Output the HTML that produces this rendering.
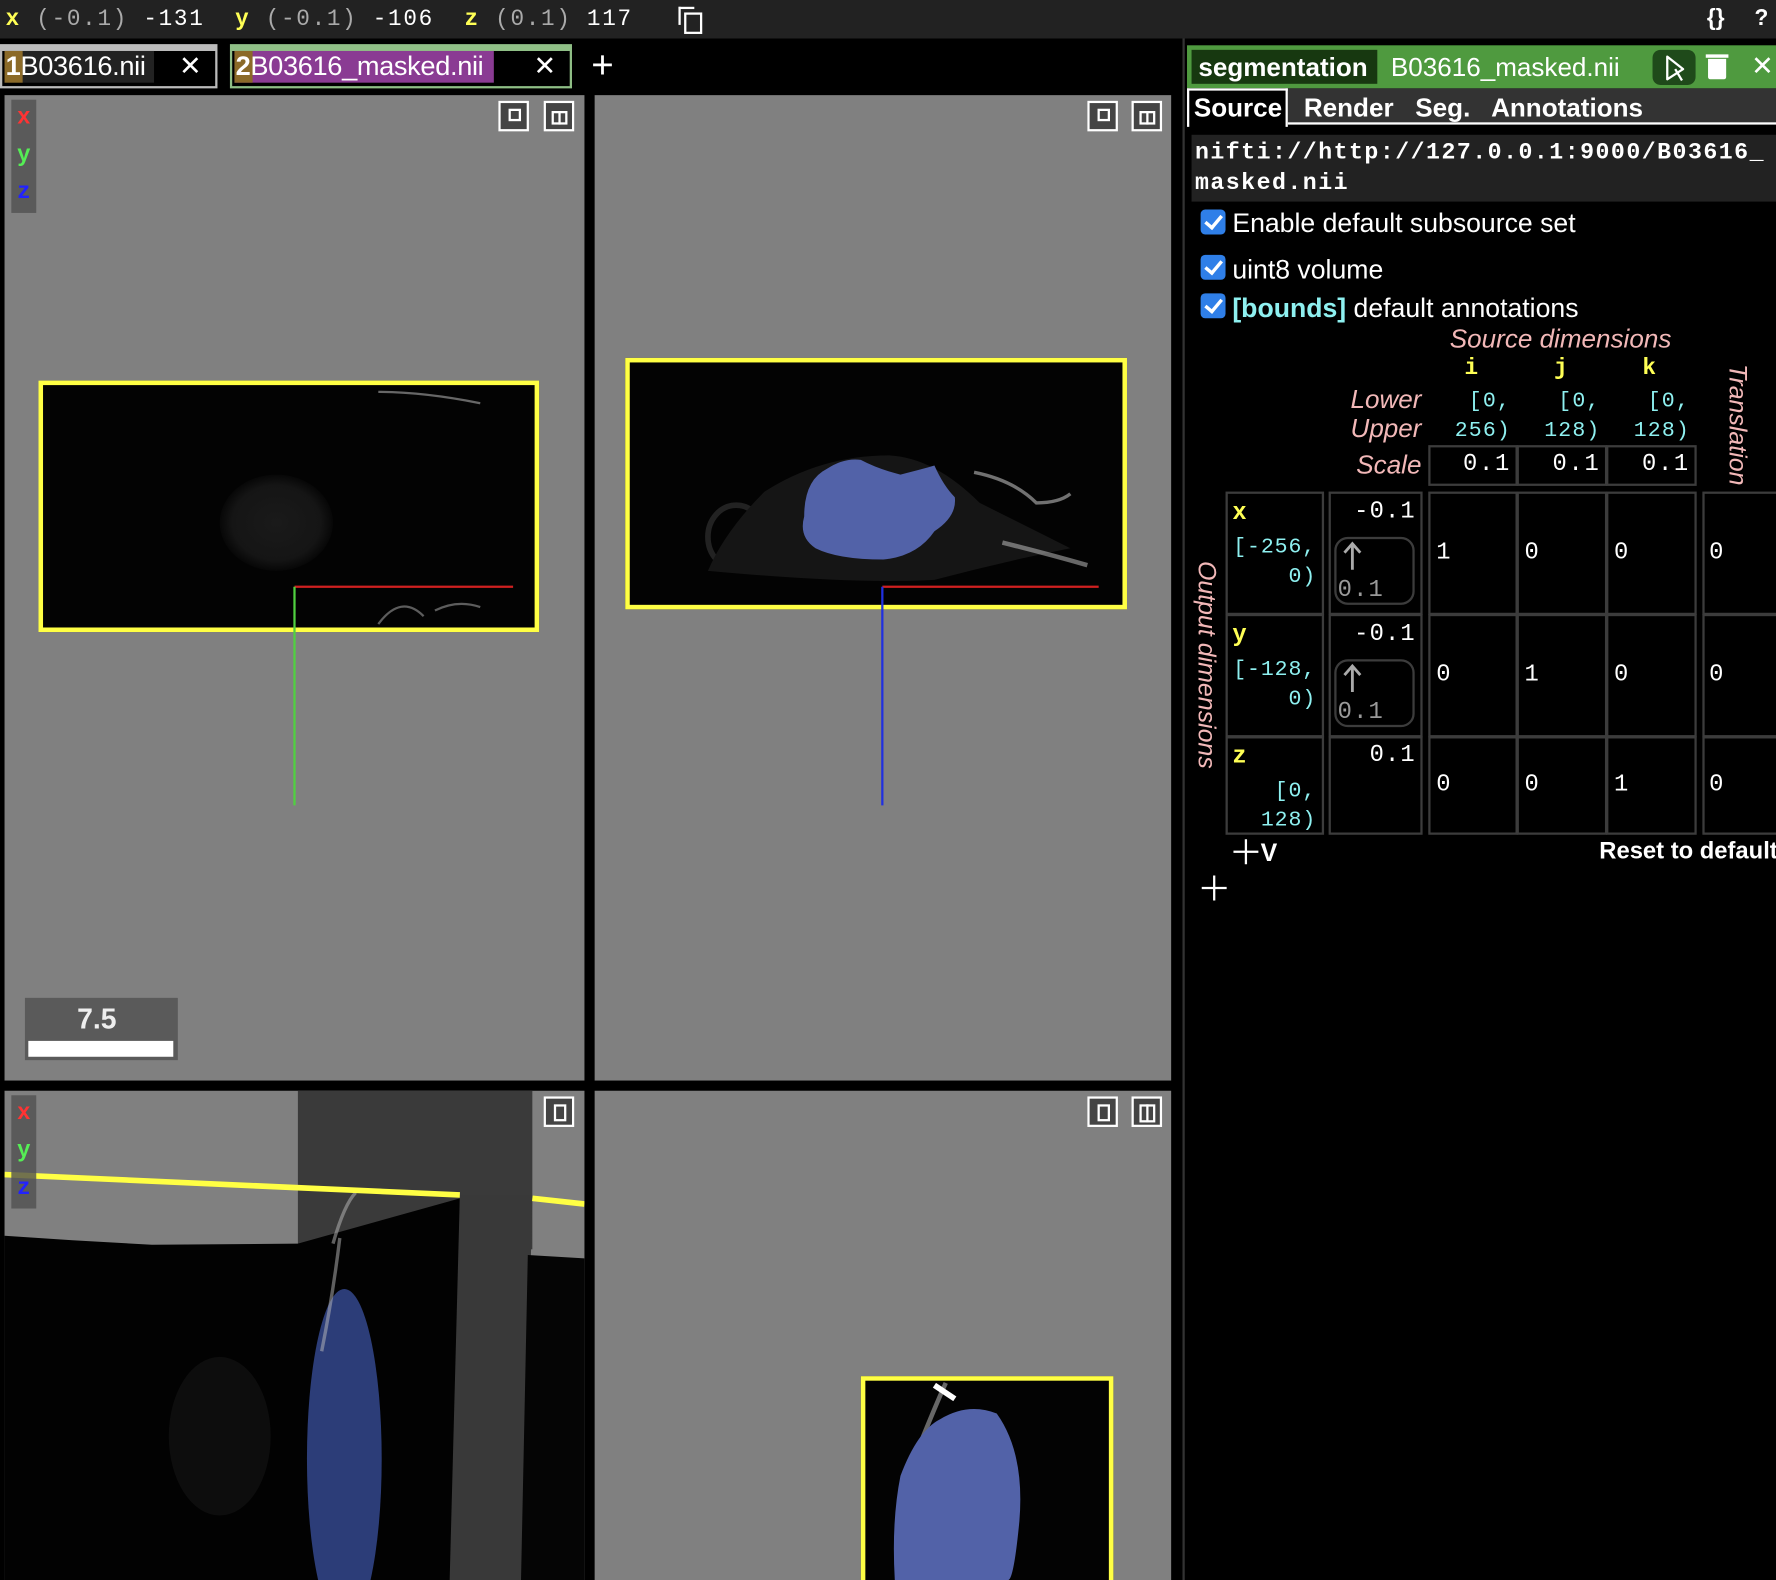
<!DOCTYPE html>
<html><head><meta charset="utf-8"><style>
html,body{margin:0;padding:0;background:#000;width:1776px;height:1580px;overflow:hidden}
#w{position:absolute;left:0;top:0;width:1568px;height:1395px;transform:scale(1.13265);transform-origin:0 0;font-family:"Liberation Sans",sans-serif;color:#fff}
.a{position:absolute}
.mono{font-family:"Liberation Mono","DejaVu Sans Mono",monospace}
.panel{position:absolute;background:#808080;overflow:hidden}
.btn{position:absolute;width:27px;height:27px;border:2px solid #fff;background:#444;box-sizing:border-box}
.btn i{position:absolute;border:2px solid #fff;box-sizing:border-box}
.axes{position:absolute;left:6px;width:22px;background:#5a5a5a;font-family:"Liberation Mono",monospace;font-size:20px;font-weight:bold;text-align:center;line-height:33px}
.cell{position:absolute;border:2px solid #3c3c3c;box-sizing:border-box}
.pink{color:#f2b8b8;font-style:italic}
.cy{color:#8ef0f0}
.yl{color:#ffff55}
.cb{position:absolute;width:22px;height:22px;background:#2f7fe8;border-radius:4px}
.cb:after{content:"";position:absolute;left:7px;top:2px;width:6px;height:12px;border:solid #fff;border-width:0 3px 3px 0;transform:rotate(40deg)}
</style></head><body><div id="w">
<div class="a" style="left:0;top:0;width:1568px;height:34px;background:#222"></div>
<div class="a mono" style="left:5px;top:6px;font-size:20px;letter-spacing:1.5px;white-space:pre;color:#fff"><span class="yl" style="font-weight:bold">x</span> <span style="color:#aaa">(-0.1)</span> -131  <span class="yl" style="font-weight:bold">y</span> <span style="color:#aaa">(-0.1)</span> -106  <span class="yl" style="font-weight:bold">z</span> <span style="color:#aaa">(0.1)</span> 117</div>
<div class="a" style="left:599px;top:6px;width:12px;height:14px;border-left:2px solid #fff;border-top:2px solid #fff"></div>
<div class="a" style="left:604px;top:11px;width:12px;height:15px;border:2px solid #fff"></div>
<div class="a" style="left:1507px;top:5px;font-size:20px;font-weight:bold">{}</div>
<div class="a" style="left:1549px;top:5px;font-size:20px;font-weight:bold">?</div>
<div class="a" style="left:0;top:39px;width:192px;height:39px;border:2px solid #bbb;border-top-width:6px;box-sizing:border-box;background:#000"></div>
<div class="a" style="left:4px;top:45px;width:132px;height:28px;background:#222"></div>
<div class="a" style="left:4px;top:45px;width:16px;height:28px;background:#8b6a28"></div>
<div class="a" style="left:5px;top:45px;font-size:24px;line-height:28px;letter-spacing:-0.3px"><b>1</b>B03616.nii</div>
<div class="a" style="left:158px;top:45px;font-size:24px;line-height:28px">✕</div>
<div class="a" style="left:203px;top:39px;width:302px;height:39px;border:2px solid #8fbf86;border-top-width:6px;box-sizing:border-box;background:#000"></div>
<div class="a" style="left:207px;top:45px;width:229px;height:28px;background:#8a3b93"></div>
<div class="a" style="left:207px;top:45px;width:16px;height:28px;background:#8b6a28"></div>
<div class="a" style="left:208px;top:45px;font-size:24px;line-height:28px;letter-spacing:-0.3px"><b>2</b>B03616_masked.nii</div>
<div class="a" style="left:471px;top:45px;font-size:24px;line-height:28px">✕</div>
<div class="a" style="left:522px;top:42px;font-size:34px;line-height:32px">+</div>

<div class="panel" style="left:4px;top:84px;width:512px;height:870px">
 <div class="axes" style="top:4px;height:100px"><span style="color:#f33">x</span><br><span style="color:#5e5">y</span><br><span style="color:#22f">z</span></div>
 <div class="btn" style="left:436px;top:5px"><i style="left:7px;top:5px;width:11px;height:11px"></i></div>
 <div class="btn" style="left:476px;top:5px"><i style="left:5px;top:7px;width:14px;height:12px"></i><i style="left:11px;top:7px;width:2px;height:12px;border-width:0 0 0 2px"></i></div>
 <div class="a" style="left:30px;top:252px;width:442px;height:222px;border:4px solid #ffff44;box-sizing:border-box;background:#030303"></div>
 <div class="a" style="left:190px;top:335px;width:100px;height:85px;border-radius:50%;background:radial-gradient(#1a1a1a,#151515 55%,#030303 75%)"></div>
 <svg class="a" style="left:0;top:0" width="512" height="870"><path d="M330 262 Q370 262 420 272" stroke="#aaa" stroke-width="2" fill="none" opacity=".6"/><path d="M330 467 Q350 440 370 460 M380 455 Q400 445 420 452" stroke="#999" stroke-width="2" fill="none" opacity=".6"/>
 <line x1="256" y1="434" x2="449" y2="434" stroke="#d02020" stroke-width="2"/><line x1="256" y1="434" x2="256" y2="627" stroke="#50d040" stroke-width="2"/></svg>
 <div class="a" style="left:18px;top:797px;width:135px;height:55px;background:#5a5a5a"></div>
 <div class="a" style="left:14px;top:802px;width:135px;text-align:center;font-size:25px;font-weight:bold;color:#eee">7.5</div>
 <div class="a" style="left:21px;top:835px;width:128px;height:14px;background:#fff"></div>
</div>
<div class="panel" style="left:525px;top:84px;width:509px;height:870px">
 <div class="btn" style="left:435px;top:5px"><i style="left:7px;top:5px;width:11px;height:11px"></i></div>
 <div class="btn" style="left:474px;top:5px"><i style="left:5px;top:7px;width:14px;height:12px"></i><i style="left:11px;top:7px;width:2px;height:12px;border-width:0 0 0 2px"></i></div>
 <div class="a" style="left:27px;top:232px;width:443px;height:222px;border:4px solid #ffff44;box-sizing:border-box;background:#030303"></div>
 <svg class="a" style="left:0;top:0" width="509" height="870">
 <ellipse cx="125" cy="390" rx="25" ry="28" stroke="#222" stroke-width="5" fill="none"/>
 <path d="M100 420 Q230 432 300 428 Q360 412 420 400 Q380 380 340 360 Q300 320 260 318 Q200 318 150 350 Q115 385 100 420Z" fill="#151515"/>
 <path d="M335 333 Q370 340 390 360 Q410 360 420 352" stroke="#bbb" stroke-width="3" fill="none" opacity=".6"/>
 <path d="M360 395 Q400 405 435 415" stroke="#ccc" stroke-width="4" fill="none" opacity=".5"/>
 <path d="M185 372 Q185 340 205 330 Q220 320 235 322 Q250 330 270 335 Q290 330 300 327 Q308 345 318 355 Q320 372 300 385 Q285 407 255 410 Q215 410 195 400 Q180 390 185 372Z" fill="#5262a8"/>
 <line x1="254" y1="434" x2="445" y2="434" stroke="#d02020" stroke-width="2"/><line x1="254" y1="434" x2="254" y2="627" stroke="#2030e0" stroke-width="2"/></svg>
</div>
<div class="panel" style="left:4px;top:963px;width:512px;height:432px">
 <svg class="a" style="left:0;top:0" width="512" height="432">
 <rect x="259" y="0" width="207" height="140" fill="#3a3a3a"/>
 <polygon points="0,128 60,132 130,136 259,135 402,95 402,432 0,432" fill="#020202"/>
 <polygon points="402,92 466,92 458,432 393,432" fill="#393939"/>
 <polygon points="462,145 512,148 512,432 456,432" fill="#050505"/>
 <ellipse cx="190" cy="305" rx="45" ry="70" fill="#0d0d0d"/>
 <ellipse cx="300" cy="325" rx="33" ry="150" fill="#2c3d78"/>
 <path d="M290 135 Q300 100 310 90 M296 130 Q290 180 280 230" stroke="#bbb" stroke-width="3" fill="none" opacity=".5"/>
 <line x1="0" y1="74" x2="402" y2="92" stroke="#ffff44" stroke-width="5"/>
 <line x1="466" y1="95" x2="512" y2="100" stroke="#ffff44" stroke-width="5"/>
 </svg>
 <div class="axes" style="top:4px;height:100px;background:rgba(80,80,80,.8)"><span style="color:#f33">x</span><br><span style="color:#5e5">y</span><br><span style="color:#22f">z</span></div>
 <div class="btn" style="left:476px;top:5px"><i style="left:7px;top:5px;width:11px;height:15px"></i></div>
</div>
<div class="panel" style="left:525px;top:963px;width:509px;height:432px">
 <div class="btn" style="left:435px;top:5px"><i style="left:7px;top:5px;width:11px;height:15px"></i></div>
 <div class="btn" style="left:474px;top:5px"><i style="left:5px;top:5px;width:14px;height:16px"></i><i style="left:11px;top:5px;width:2px;height:16px;border-width:0 0 0 2px"></i></div>
 <div class="a" style="left:235px;top:252px;width:223px;height:200px;border:4px solid #ffff44;box-sizing:border-box;background:#030303"></div>
 <svg class="a" style="left:0;top:0" width="509" height="432">
 <path d="M310 258 Q300 280 280 330 Q265 380 270 432" stroke="#aaa" stroke-width="4" fill="none" opacity=".6"/>
 <path d="M300 260 L318 272" stroke="#fff" stroke-width="5"/>
 <path d="M305 290 Q330 275 355 285 Q380 320 375 380 Q370 432 365 432 L265 432 Q262 380 270 340 Q285 300 305 290Z" fill="#5262a8"/></svg>
</div>

<div class="a" style="left:1044px;top:34px;width:2px;height:1361px;background:#333"></div>
<div class="a" style="left:1048px;top:40px;width:520px;height:38px;background:#4f9a3f"></div>
<div class="a" style="left:1052px;top:44px;width:164px;height:30px;background:#173810"></div>
<div class="a" style="left:1058px;top:45px;font-size:23px;font-weight:bold;line-height:28px">segmentation</div>
<div class="a" style="left:1228px;top:45px;font-size:23px;line-height:28px">B03616_masked.nii</div>
<div class="a" style="left:1459px;top:44px;width:38px;height:31px;border-radius:7px;background:#1f4a1a"></div>
<svg class="a" style="left:1466px;top:47px" width="24" height="26"><path d="M6 3 L20 14 L6 23Z" fill="none" stroke="#fff" stroke-width="2" stroke-linejoin="round"/><path d="M13 14 L19 24" stroke="#fff" stroke-width="2"/></svg>
<div class="a" style="left:1508px;top:52px;width:16px;height:18px;background:#fff;border-radius:0 0 2px 2px"></div>
<div class="a" style="left:1506px;top:48px;width:20px;height:3px;background:#fff"></div>
<div class="a" style="left:1546px;top:45px;font-size:24px;line-height:28px">✕</div>
<div class="a" style="left:1048px;top:78px;width:520px;height:32px;background:#333;border-bottom:2px solid #fff;box-sizing:border-box"></div>
<div class="a" style="left:1048px;top:78px;width:89px;height:34px;background:#000;border:2px solid #fff;border-bottom:none;box-sizing:border-box"></div>
<div class="a" style="left:1054px;top:81px;font-size:23px;font-weight:bold;white-space:pre;line-height:28px">Source   Render   Seg.   Annotations</div>

<div class="a" style="left:1052px;top:119px;width:516px;height:59px;background:#222"></div>
<div class="a mono" style="left:1055px;top:122px;font-size:20.5px;letter-spacing:1.3px;line-height:27px;font-weight:bold;white-space:pre">nifti://http://127.0.0.1:9000/B03616_
masked.nii</div>
<div class="cb" style="left:1060px;top:185px"></div>
<div class="a" style="left:1088px;top:184px;font-size:23.5px">Enable default subsource set</div>
<div class="cb" style="left:1060px;top:225px"></div>
<div class="a" style="left:1088px;top:225px;font-size:23.5px">uint8 volume</div>
<div class="cb" style="left:1060px;top:259px"></div>
<div class="a" style="left:1088px;top:259px;font-size:23.5px"><b class="cy">[bounds]</b> default annotations</div>
<div class="a pink" style="left:1280px;top:286px;font-size:23px">Source dimensions</div>
<div class="a mono yl" style="left:1293px;top:314px;font-size:20px;font-weight:bold">i</div>
<div class="a mono yl" style="left:1372px;top:314px;font-size:20px;font-weight:bold">j</div>
<div class="a mono yl" style="left:1450px;top:314px;font-size:20px;font-weight:bold">k</div>
<div class="a pink" style="left:1150px;top:339px;width:105px;text-align:right;font-size:23px;line-height:26px">Lower<br>Upper</div>
<div class="a mono cy" style="left:1262px;top:341px;width:72px;text-align:right;font-size:19px;letter-spacing:1px;line-height:26px;white-space:pre">[0,
256)</div>
<div class="a mono cy" style="left:1340px;top:341px;width:73px;text-align:right;font-size:19px;letter-spacing:1px;line-height:26px;white-space:pre">[0,
128)</div>
<div class="a mono cy" style="left:1419px;top:341px;width:73px;text-align:right;font-size:19px;letter-spacing:1px;line-height:26px;white-space:pre">[0,
128)</div>
<div class="a pink" style="left:1150px;top:397px;width:105px;text-align:right;font-size:23px">Scale</div>
<div class="cell" style="left:1261px;top:393px;width:79px;height:36px"></div>
<div class="cell" style="left:1339px;top:393px;width:80px;height:36px"></div>
<div class="cell" style="left:1418px;top:393px;width:80px;height:36px"></div>
<div class="a mono" style="left:1262px;top:399px;width:72px;text-align:right;font-size:21px;letter-spacing:1.5px">0.1</div>
<div class="a mono" style="left:1340px;top:399px;width:73px;text-align:right;font-size:21px;letter-spacing:1.5px">0.1</div>
<div class="a mono" style="left:1419px;top:399px;width:73px;text-align:right;font-size:21px;letter-spacing:1.5px">0.1</div>
<div class="a pink" style="left:1478px;top:362px;width:112px;text-align:center;font-size:22px;transform:rotate(90deg)">Translation</div>
<div class="a pink" style="left:965px;top:574px;width:200px;text-align:center;font-size:22px;transform:rotate(90deg)">Output dimensions</div>

<div class="cell" style="left:1082px;top:434px;width:87px;height:109px"></div>
<div class="cell" style="left:1082px;top:542px;width:87px;height:109px"></div>
<div class="cell" style="left:1082px;top:650px;width:87px;height:87px"></div>
<div class="cell" style="left:1173px;top:434px;width:83px;height:109px"></div>
<div class="cell" style="left:1173px;top:542px;width:83px;height:109px"></div>
<div class="cell" style="left:1173px;top:650px;width:83px;height:87px"></div>
<div class="cell" style="left:1261px;top:434px;width:79px;height:109px"></div>
<div class="cell" style="left:1339px;top:434px;width:80px;height:109px"></div>
<div class="cell" style="left:1418px;top:434px;width:80px;height:109px"></div>
<div class="cell" style="left:1261px;top:542px;width:79px;height:109px"></div>
<div class="cell" style="left:1339px;top:542px;width:80px;height:109px"></div>
<div class="cell" style="left:1418px;top:542px;width:80px;height:109px"></div>
<div class="cell" style="left:1261px;top:650px;width:79px;height:87px"></div>
<div class="cell" style="left:1339px;top:650px;width:80px;height:87px"></div>
<div class="cell" style="left:1418px;top:650px;width:80px;height:87px"></div>
<div class="cell" style="left:1503px;top:434px;width:80px;height:109px"></div>
<div class="cell" style="left:1503px;top:542px;width:80px;height:109px"></div>
<div class="cell" style="left:1503px;top:650px;width:80px;height:87px"></div>

<div class="a mono yl" style="left:1088px;top:442px;font-size:21px;font-weight:bold">x</div>
<div class="a mono cy" style="left:1086px;top:470px;width:76px;text-align:right;font-size:19px;letter-spacing:0.8px;line-height:26px;white-space:pre">[-256,
0)</div>
<div class="a mono yl" style="left:1088px;top:550px;font-size:21px;font-weight:bold">y</div>
<div class="a mono cy" style="left:1086px;top:578px;width:76px;text-align:right;font-size:19px;letter-spacing:0.8px;line-height:26px;white-space:pre">[-128,
0)</div>
<div class="a mono yl" style="left:1088px;top:657px;font-size:21px;font-weight:bold">z</div>
<div class="a mono cy" style="left:1086px;top:685px;width:76px;text-align:right;font-size:19px;letter-spacing:0.8px;line-height:26px;white-space:pre">[0,
128)</div>

<div class="a mono" style="left:1176px;top:441px;width:74px;text-align:right;font-size:21px;letter-spacing:1px">-0.1</div>
<div class="a" style="left:1178px;top:474px;width:71px;height:60px;border:2px solid #3c3c3c;border-radius:12px;box-sizing:border-box"></div>
<svg class="a" style="left:1184px;top:477px" width="20" height="28"><path d="M10 26 V3 M3 11 L10 3 L17 11" stroke="#aaa" stroke-width="2.5" fill="none"/></svg>
<div class="a mono" style="left:1181px;top:510px;font-size:21px;letter-spacing:1px;color:#999">0.1</div>
<div class="a mono" style="left:1176px;top:549px;width:74px;text-align:right;font-size:21px;letter-spacing:1px">-0.1</div>
<div class="a" style="left:1178px;top:582px;width:71px;height:60px;border:2px solid #3c3c3c;border-radius:12px;box-sizing:border-box"></div>
<svg class="a" style="left:1184px;top:585px" width="20" height="28"><path d="M10 26 V3 M3 11 L10 3 L17 11" stroke="#aaa" stroke-width="2.5" fill="none"/></svg>
<div class="a mono" style="left:1181px;top:618px;font-size:21px;letter-spacing:1px;color:#999">0.1</div>
<div class="a mono" style="left:1176px;top:656px;width:74px;text-align:right;font-size:21px;letter-spacing:1px">0.1</div>

<div class="a mono" style="left:1268px;top:477px;font-size:21px">1</div>
<div class="a mono" style="left:1346px;top:477px;font-size:21px">0</div>
<div class="a mono" style="left:1425px;top:477px;font-size:21px">0</div>
<div class="a mono" style="left:1509px;top:477px;font-size:21px">0</div>
<div class="a mono" style="left:1268px;top:585px;font-size:21px">0</div>
<div class="a mono" style="left:1346px;top:585px;font-size:21px">1</div>
<div class="a mono" style="left:1425px;top:585px;font-size:21px">0</div>
<div class="a mono" style="left:1509px;top:585px;font-size:21px">0</div>
<div class="a mono" style="left:1268px;top:682px;font-size:21px">0</div>
<div class="a mono" style="left:1346px;top:682px;font-size:21px">0</div>
<div class="a mono" style="left:1425px;top:682px;font-size:21px">1</div>
<div class="a mono" style="left:1509px;top:682px;font-size:21px">0</div>

<svg class="a" style="left:1088px;top:740px" width="24" height="24"><path d="M12 1 V23 M1 12 H23" stroke="#fff" stroke-width="2"/></svg>
<div class="a" style="left:1113px;top:740px;font-size:22px;font-weight:bold">V</div>
<div class="a" style="left:1412px;top:740px;font-size:21px;font-weight:bold;white-space:nowrap">Reset to default</div>
<svg class="a" style="left:1060px;top:772px" width="24" height="24"><path d="M12 1 V23 M1 12 H23" stroke="#fff" stroke-width="2"/></svg>
</div></body></html>
